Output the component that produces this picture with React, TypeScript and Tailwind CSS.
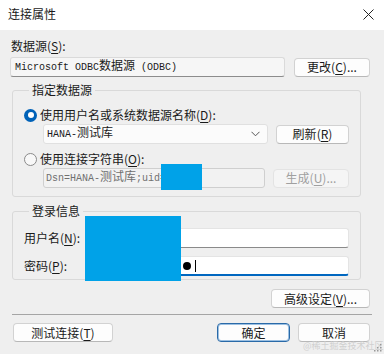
import React from "react"

const ui = { fontFamily: '"Noto Sans CJK SC", "Noto Sans", sans-serif' }
const mono = { fontFamily: '"Liberation Mono", "Noto Sans CJK SC", monospace' }

function Key({ k }: { k: string }) {
  return (
    <>
      (<span className="underline underline-offset-[2px]">{k}</span>)
    </>
  )
}

function Btn({
  children,
  w,
  disabled,
  primary,
}: {
  children: React.ReactNode
  w: string
  disabled?: boolean
  primary?: boolean
}) {
  const base = "h-[19px] flex items-center justify-center rounded-[4px] text-[12px] leading-none "
  let look = "bg-[#fdfdfd] border border-[#d2d2d2] border-b-[#b8b8b8] text-[#1a1a1a]"
  if (disabled) look = "bg-[#f5f5f5] border border-[#e3e3e3] text-[#a0a0a0]"
  if (primary) look = "bg-[#fdfdfd] border border-[#2a6aa8] shadow-[inset_0_0_0_1px_#9cc0e2] text-[#1a1a1a]"
  return <div className={base + look + " " + w}>{children}</div>
}

function Radio({ on }: { on?: boolean }) {
  if (on) {
    return (
      <div className="w-[13px] h-[13px] rounded-full bg-[#0062b8] flex items-center justify-center">
        <div className="w-[6px] h-[6px] rounded-full bg-white" />
      </div>
    )
  }
  return <div className="w-[13px] h-[13px] rounded-full border border-[#8a8a8a] bg-[#f8f8f8]" />
}

export default function App() {
  const dots = Array.from({ length: 10 })

  return (
    <div className="relative w-[384px] h-[354px] bg-[#efefef] overflow-hidden text-[#1a1a1a]" style={ui}>
      {/* title bar */}
      <div className="h-[30px] bg-white flex items-center justify-between pl-[8px] pr-[9px] pb-[2px]">
        <span className="text-[12px] leading-none">连接属性</span>
        <svg width="11" height="11" viewBox="0 0 11 11" className="mr-[1px]">
          <path d="M0.5 0.5 L10.5 10.5 M10.5 0.5 L0.5 10.5" stroke="#222" strokeWidth="1" />
        </svg>
      </div>

      <div className="pl-[10px] pr-[14px]">
        <div className="mt-[8px] h-[16px] flex items-center pl-[1px] text-[12px]">
          数据源<Key k="S" />:
        </div>

        <div className="mt-[3px] flex items-center justify-between">
          <div className="w-[275px] h-[20px] flex items-center pl-[4px] bg-[#f6f6f6] border border-[#dadada] border-b-[#8c8c8c] rounded-[3px] text-[10px] whitespace-pre" style={mono}>
            {"Microsoft ODBC"}<span className="text-[12px]">数据源</span>{" (ODBC)"}
          </div>
          <Btn w="w-[76px]">
            更改<Key k="C" />...
          </Btn>
        </div>

        {/* 指定数据源 */}
        <fieldset className="mt-[5px] ml-[2px] w-[349px] border border-[#d9d9d9] rounded-[3px] pl-[11px] pb-[8px]">
          <legend className="ml-[5px] px-[3px] h-[16px] text-[12px] leading-[16px]">指定数据源</legend>
          <div className="mt-[9px] h-[16px] flex items-center gap-[3px] text-[12px]">
            <Radio on />
            <span>
              使用用户名或系统数据源名称<Key k="D" />:
            </span>
          </div>
          <div className="mt-[1px] ml-[19px] flex items-center gap-[8px]">
            <div className="w-[225px] h-[20px] flex items-center justify-between pl-[3px] pr-[7px] bg-[#fbfbfb] border border-[#e0e0e0] rounded-[3px] text-[10px]" style={mono}>
              <span>
                HANA-<span className="text-[12px]">测试库</span>
              </span>
              <svg width="9" height="6" viewBox="0 0 9 6">
                <path d="M0.5 0.8 L4.5 4.8 L8.5 0.8" fill="none" stroke="#555" strokeWidth="1" />
              </svg>
            </div>
            <Btn w="w-[73px]">
              刷新<Key k="R" />
            </Btn>
          </div>
          <div className="mt-[7px] h-[16px] flex items-center gap-[3px] text-[12px]">
            <Radio />
            <span>
              使用连接字符串<Key k="O" />:
            </span>
          </div>
          <div className="mt-[1px] ml-[19px] flex items-center gap-[8px]">
            <div className="w-[222px] h-[20px] flex items-center pl-[2px] bg-[#f2f2f2] border border-[#cfcfcf] rounded-[3px] text-[10px] text-[#707070]" style={mono}>
              Dsn=HANA-<span className="text-[12px]">测试库</span>;uid=
            </div>
            <Btn w="w-[76px]" disabled>
              生成<Key k="U" />...
            </Btn>
          </div>
        </fieldset>

        {/* 登录信息 */}
        <fieldset className="mt-[6px] ml-[2px] w-[349px] border border-[#d9d9d9] rounded-[3px] pl-[11px] pb-[3px]">
          <legend className="ml-[5px] px-[3px] h-[16px] text-[12px] leading-[16px]">登录信息</legend>
          <div className="mt-[9px] flex items-center">
            <span className="w-[64px] text-[12px]">
              用户名<Key k="N" />:
            </span>
            <div className="w-[261px] h-[20px] bg-white border border-[#e4e4e4] border-b-[#8a8a8a] rounded-[3px]" />
          </div>
          <div className="mt-[8px] flex items-center">
            <span className="w-[64px] text-[12px]">
              密码<Key k="P" />:
            </span>
            <div className="w-[261px] h-[20px] flex items-center pl-[4px] bg-white border border-[#e4e4e4] border-b-2 border-b-[#0067c0] rounded-[3px]">
              <div className="flex items-center gap-[2px]">
                {dots.map((_, i) => (
                  <div key={i} className="w-[8px] h-[8px] rounded-full bg-black" />
                ))}
              </div>
              <div className="ml-[4px] w-px h-[12px] bg-black" />
            </div>
          </div>
        </fieldset>

        <div className="mt-[9px] flex justify-end">
          <Btn w="w-[99px]">
            高级设定<Key k="V" />...
          </Btn>
        </div>

        <div className="mt-[6px] ml-[2px] -mr-[2px] h-px bg-[#a5a5a5]" />

        <div className="mt-[8px] flex items-center">
          <div className="ml-[3px]">
            <Btn w="w-[100px]">
              测试连接<Key k="T" />
            </Btn>
          </div>
          <div className="ml-auto flex items-center gap-[8px]">
            <Btn w="w-[73px]" primary>
              确定
            </Btn>
            <Btn w="w-[72px]">取消</Btn>
          </div>
        </div>
      </div>

      {/* redaction blocks */}
      <div className="absolute left-[161px] top-[164px] w-[41px] h-[26px] bg-[#00a2e8]" />
      <div className="absolute left-[85px] top-[216px] w-[96px] h-[65px] bg-[#00a2e8]" />

      {/* watermark */}
      <div className="absolute left-[303px] top-[341px] text-[9px] leading-none whitespace-nowrap text-[#cfcfcf]">
        @稀土掘金技术社区
      </div>

      {/* size grip */}
      <svg width="8" height="8" viewBox="0 0 8 8" className="absolute right-[2px] bottom-[2px]">
        <rect x="6" y="0" width="1.5" height="1.5" fill="#999" />
        <rect x="3" y="3" width="1.5" height="1.5" fill="#999" />
        <rect x="6" y="3" width="1.5" height="1.5" fill="#999" />
        <rect x="0" y="6" width="1.5" height="1.5" fill="#999" />
        <rect x="3" y="6" width="1.5" height="1.5" fill="#999" />
        <rect x="6" y="6" width="1.5" height="1.5" fill="#999" />
      </svg>
    </div>
  )
}
